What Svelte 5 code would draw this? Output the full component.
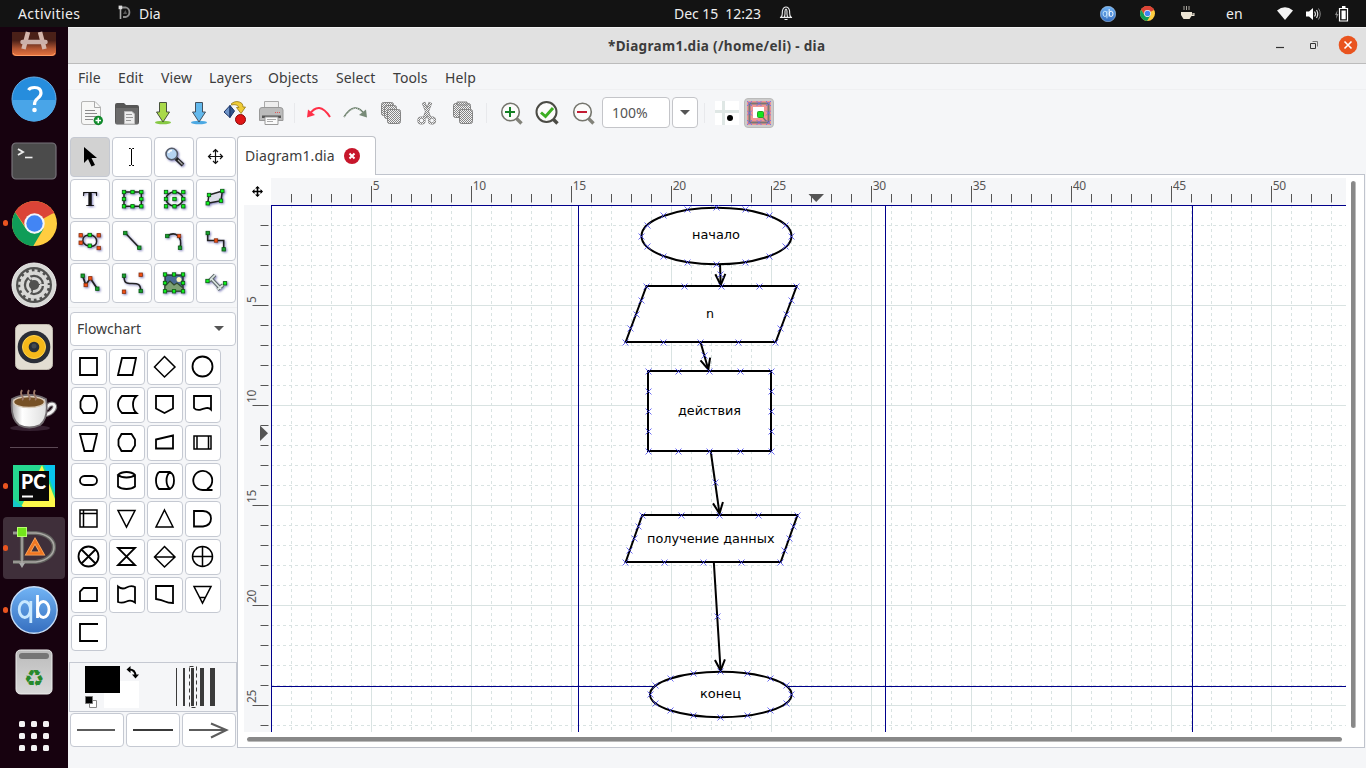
<script>
  const menus = [['File', 40], ['Edit', 43], ['View', 48], ['Layers', 59], ['Objects', 68], ['Select', 57], ['Tools', 52], ['Help', 44]];

  const shapes = [
    'M9 9H26V26H9Z',
    'M13 9H27L23.5 26H9Z',
    'M17.5 7.5L28 18 17.5 28 7.5 18Z',
    'M7.5 17.5a10 10 0 1 0 20 0a10 10 0 1 0 -20 0',
    'M12.5 9H23Q26 12 26 17.5Q26 23 23 26H12.5L9.5 21V14.5Z',
    'M13 9H27.5Q24 12 24 17.5Q24 23 27.5 26H13Q9 22 9 17.5Q9 13 13 9Z',
    'M9 9H26V21.5L17.5 26 9 21.5Z',
    'M9 9H26V22.5Q24 20.5 21 21.2T15 22.8Q11 23.5 9 21Z',
    'M9 9H26L22 26H13.5Z',
    'M12.5 9H22.5L26 14.5V20.5L22.5 26H12.5L9.5 20.5V14.5Z',
    'M9 14.5L26 10.5V23.5H9Z',
    'M9 11H26V24H9ZM12 11V24M23.5 11V24',
    'M13.5 13H21.5A4.5 4.5 0 0 1 21.5 22H13.5A4.5 4.5 0 0 1 13.5 13Z',
    'M9 12V23.5Q12 26 17.5 26T26 23.5V12Q23 9 17.5 9T9 12Q12 14.5 17.5 14.5T26 12',
    'M12 9H23Q27 11 27 17.5T23 26H12Q9 23 9 17.5T12 9M23 9Q19.5 12 19.5 17.5T23 26',
    'M17.5 27A9.5 9.5 0 1 1 22 26M17.5 27H27.5',
    'M9 9H26V26H9ZM9 12.5H26M12.5 9V26',
    'M9 9.5H26L17.5 26Z',
    'M17.5 9L26 26H9Z',
    'M9 10H18Q26 10.5 26 17.5T18 25.5H9Z',
    'M7.5 17.5a10 10 0 1 0 20 0a10 10 0 1 0 -20 0M10.5 10.5L24.5 24.5M24.5 10.5L10.5 24.5',
    'M9 9H26L9 26H26Z',
    'M17.5 7.5L28 18 17.5 28 7.5 18ZM7.5 18H28',
    'M7.5 17.5a10 10 0 1 0 20 0a10 10 0 1 0 -20 0M7.5 17.5H27.5M17.5 7.5V27.5',
    'M12.5 11H26V24H9V14.5Z',
    'M9 9.5Q13 13 17.5 10.5T26 10V25.5Q22 22.5 17.5 24.5T9 25Z',
    'M9 9H26V26Q21 26 18 24.5T9 22Z',
    'M9 9.5H26L17.5 26ZM14.5 20.5H20.5',
    'M27 9H9V26H27'
  ];

  const tools = ['pointer', 'edit', 'magnify', 'scroll', 'text', 'box', 'ellipse', 'polygon', 'beziergon', 'line', 'arc', 'zigzag', 'polyline', 'bezier', 'image', 'outline'];

  const range = (a, b) => Array.from({ length: b - a + 1 }, (_, i) => a + i);
  const cols = range(1, 53);
  const rows = range(1, 26);

  const ellipses = [
    { cx: 716.5, cy: 236, rx: 75, ry: 28.3 },
    { cx: 720.8, cy: 694.5, rx: 70.8, ry: 22.7 }
  ];
  const polys = [
    [[646.5, 286], [796.7, 286], [775.7, 342], [625.7, 342]],
    [[648, 371], [771, 371], [771, 451], [648, 451]],
    [[642.3, 515], [797.5, 515], [780.7, 562], [625.7, 562]]
  ];
  const arrows = [
    [720, 264, 720.7, 285],
    [700.5, 342, 708.3, 369.5],
    [710.7, 451, 719.5, 513.5],
    [713.8, 562, 720.6, 670.5]
  ];
  const labels = [
    ['начало', 692, 239, 48],
    ['n', 706, 318, 8],
    ['действия', 678, 415, 63],
    ['получение данных', 647, 543, 127.5],
    ['конец', 700, 698, 41]
  ];

  const head = ([x1, y1, x2, y2]) => {
    const a = Math.atan2(y2 - y1, x2 - x1);
    const p = (s) => `${x2 - 12 * Math.cos(a + s)} ${y2 - 12 * Math.sin(a + s)}`;
    return `M${p(0.43)}L${x2} ${y2}L${p(-0.43)}`;
  };

  const points = [
    ...ellipses.flatMap((e) => range(0, 15).map((i) => [e.cx + e.rx * Math.cos((i * Math.PI) / 8), e.cy + e.ry * Math.sin((i * Math.PI) / 8)])),
    ...polys.flatMap((p) => p.flatMap((a, i) => {
      const b = p[(i + 1) % 4];
      return range(0, 3).map((k) => [a[0] + ((b[0] - a[0]) * k) / 4, a[1] + ((b[1] - a[1]) * k) / 4]);
    })),
    ...arrows.map((a) => [(a[0] + a[2]) / 2, (a[1] + a[3]) / 2])
  ].map(([x, y]) => [Math.floor(x) + 0.5, Math.floor(y) + 0.5]);

  const boxHandles = [[12, 13], [20.5, 13], [29.3, 13], [12, 20], [29.3, 20], [12, 27.3], [20.5, 27.3], [29.3, 27.3]];
</script>

{#snippet knob(x, y, c)}
  <rect x={x - 1.7} y={y - 1.7} width="3.4" height="3.4" fill={c === 'r' ? '#f04d12' : c === 'd' ? '#18a030' : '#10f020'} stroke={c === 'r' ? '#8a3410' : '#0a5a10'} stroke-width=".8" />
{/snippet}

{#snippet chrome(s)}
  <svg width={s} height={s} viewBox="0 0 44 44">
    <circle cx="22" cy="22" r="22" fill="#ffcd40" />
    <path d="M22 22L3 11A22 22 0 0 1 41 11.5Z" fill="#db4437" />
    <path d="M22 12H41.5A22 22 0 0 0 3 11L13 25Z" fill="#db4437" />
    <path d="M3 11A22 22 0 0 0 20.8 44L31 27 22 32 13.5 27Z" fill="#0f9d58" />
    <circle cx="22" cy="22" r="10" fill="#f2f5fa" />
    <circle cx="22" cy="22" r="8" fill="#4285f4" />
  </svg>
{/snippet}

{#snippet qb(s)}
  <svg width={s} height={s} viewBox="0 0 48 48">
    <defs><linearGradient id="qbg" x1="0" y1="0" x2="0" y2="1"><stop offset="0" stop-color="#72b4f5" /><stop offset="1" stop-color="#356ebf" /></linearGradient></defs>
    <circle cx="24" cy="24" r="23.2" fill="url(#qbg)" stroke="#c5dcf6" stroke-width="1.4" />
    <g fill="none" stroke-width="2.8">
      <g stroke="#c8e8ff"><ellipse cx="14.8" cy="23.5" rx="5.6" ry="8" /><path d="M20.8 15V37" /></g>
      <g stroke="#fff"><path d="M27.5 9V32" /><ellipse cx="33.3" cy="23.5" rx="5.7" ry="8" /></g>
    </g>
  </svg>
{/snippet}

<div class="desktop">
  <header class="topbar">
    <span class="act">Activities</span>
    <svg class="dialogo" width="15" height="15" viewBox="0 0 15 15" fill="none"><path d="M1 2.5H8A5 5 0 0 1 8 12H5" stroke="#8d8d8d" stroke-width="1.8" /><path d="M2.5 2V14" stroke="#aaa" stroke-width="1.6" /><path d="M5 9L7.5 5 9 9Z" fill="#555" /><rect x=".6" y=".6" width="3.6" height="3.6" fill="#ddd" /></svg>
    <span class="appname">Dia</span>
    <span class="clock">Dec 15&nbsp; 12:23</span>
    <svg class="bell" width="14" height="16" viewBox="0 0 14 16" fill="none" stroke="#eee" stroke-width="1.1"><path d="M2 12.4C4 10.5 3 8 3.5 5.5Q4.3 2 7 2T10.5 5.5C11 8 10 10.5 12 12.4ZM5.5 12Q6.3 9 6 6.5Q6.2 4 7 4T8 6.5Q7.7 9 8.5 12M5.5 14.5H8.5M1 12.4H3M11 12.4H13" /></svg>
    <div class="tray">
      <span class="t1">{@render qb(16)}</span>
      <span class="t2">{@render chrome(15)}</span>
      <svg class="t3" width="16" height="15" viewBox="0 0 16 15"><path d="M1 6H12V7H14.5V10H11.5L9.5 13H3.5L1 9Z" fill="#ece4d4" /><path d="M12 8H13.5" stroke="#131313" /><path d="M4 0V4M6.5 0V4M9 0V4" stroke="#aaa69e" /></svg>
      <span class="t4">en</span>
      <svg class="t5" width="16" height="13" viewBox="0 0 16 13"><path d="M0 3.5Q8-3 16 3.5L8 13Z" fill="#f4f4f4" /></svg>
      <svg class="t6" width="15" height="14" viewBox="0 0 15 14" fill="none" stroke="#ddd"><path d="M0 4.5H3L7 1V13L3 9.5H0Z" fill="#fff" stroke="none" /><path d="M8.5 4.5Q10.5 7 8.5 9.5M10.5 3Q13 7 10.5 11" stroke-width="1.2" /><path d="M12.5 1.5Q16 7 12.5 12.5" stroke="#888" /></svg>
      <svg class="t7" width="15" height="16" viewBox="0 0 15 16"><path d="M2.5 4L0 9H1.500L1 13 3.500 8H2Z" fill="#8a8a8a" /><path d="M4.5 2.5H12.5V15H4.5Z" fill="none" stroke="#fff" stroke-width="1.2" /><path d="M7 0H10.5V2H7ZM6.5 4.5H10.7V13.2H6.5Z" fill="#fff" /></svg>
    </div>
  </header>

  <div class="below">
    <nav class="dock">
      <div class="dockin">
        <div class="slot"><svg width="46" height="44" viewBox="0 0 46 44"><defs><linearGradient id="sw" x1="0" y1="0" x2="0" y2="1"><stop offset=".35" stop-color="#4a2018" /><stop offset=".7" stop-color="#b25532" /><stop offset="1" stop-color="#ea7540" /></linearGradient></defs><path d="M1 17H45V37Q45 41 41 41H5Q1 41 1 37Z" fill="url(#sw)" /><path d="M2 38Q3 40.5 6 40.5H40Q43 40.5 44 38" fill="none" stroke="#ff9c66" /><path d="M17 17L12.500 34M29 17L33.500 34" stroke="#d4b5ab" stroke-width="4.5" /><path d="M11.5 27H34.5" stroke="#cbb0aa" stroke-width="4.5" stroke-linecap="round" /></svg></div>
        <div class="slot"><svg width="46" height="46" viewBox="0 0 46 46"><circle cx="23" cy="23" r="22" fill="#268ddd" stroke="#66afe9" /><path d="M1.5 24H44.5A21.5 21.5 0 0 1 1.5 24Z" fill="#49a5e8" /><path d="M17.5 14Q19 11.5 23.5 11.5Q30 11.5 30 17Q30 20 26.5 22.5Q23.5 24.5 23.5 29" fill="none" stroke="#fff" stroke-width="3.2" /><circle cx="23.5" cy="34" r="2.3" fill="#fff" /></svg></div>
        <div class="slot"><svg width="46" height="38" viewBox="0 0 46 38"><rect x="1" y="1" width="44" height="36" rx="4" fill="#4b4b4b" stroke="#77737a" stroke-width="1.2" /><path d="M7 7L12 10 7 13" fill="none" stroke="#eee" stroke-width="1.9" /><path d="M14 15.5H21.5" stroke="#eee" stroke-width="1.6" /></svg></div>
        <div class="slot on">{@render chrome(45)}</div>
        <div class="slot"><svg width="46" height="46" viewBox="0 0 46 46" fill="none"><circle cx="23" cy="23" r="22" fill="#d8d8d6" stroke="#f0f0ee" /><circle cx="23" cy="23" r="18" fill="#515150" /><circle cx="23" cy="23" r="12" stroke="#d8d8d6" stroke-width="3.6" /><circle cx="23" cy="23" r="14.5" stroke="#d8d8d6" stroke-width="2.6" stroke-dasharray="3 2.7" /><circle cx="23" cy="23" r="6.5" stroke="#d8d8d6" stroke-width="2.8" stroke-dasharray="11.2 2.4" /><path d="M29 23H34M20 17.5L17 13M20 28.5L17 33" stroke="#d8d8d6" stroke-width="2.2" /></svg></div>
        <div class="slot"><svg width="38" height="46" viewBox="0 0 38 46"><rect x=".5" y=".5" width="37" height="45" rx="5" fill="#e2ddd2" stroke="#bdb7ac" /><circle cx="19" cy="23" r="16.3" fill="#2a2e37" /><circle cx="19" cy="23" r="11.5" fill="#f5b91a" stroke="#ffd550" /><circle cx="19" cy="23" r="5.3" fill="#2a3038" /><circle cx="19" cy="22" r="2.5" fill="#454b51" /></svg></div>
        <div class="slot"><svg class="cup" width="50" height="42" viewBox="0 0 50 42"><defs><linearGradient id="cup" x1="0" x2="1"><stop offset="0" stop-color="#aaa7a8" /><stop offset=".3" stop-color="#fff" /><stop offset="1" stop-color="#ddd" /></linearGradient></defs><ellipse cx="20" cy="39" rx="20" ry="3" fill="#352030" /><path d="M36 20C40 12 47 15 44 20Q41 25 34 26" fill="none" stroke="#777275" stroke-width="5" /><path d="M36 20C40 12 47 15 44 20Q41 25 34 26" fill="none" stroke="#f4f2f3" stroke-width="2.8" /><path d="M2 10Q19 2 36 10Q39 29 30 36Q19 41 9 36Q0 29 2 10Z" fill="url(#cup)" stroke="#726c70" stroke-width="1.8" /><ellipse cx="19" cy="13" rx="15.5" ry="5.5" fill="#775126" stroke="#d9cbb9" stroke-width="1.5" /><path d="M12 1Q10 4 12 7T12 11M19 1Q17 4 19 7T19 11M25 1Q23 4 25 7T25 11" fill="none" stroke="#9b7868" stroke-width="1.8" /></svg></div>
        <div class="docksep"></div>
        <div class="slot on"><svg width="42" height="42" viewBox="0 0 42 42"><path d="M0 0H42V42H0Z" fill="#25d890" /><path d="M29 0L42 34V42H8L0 30Z" fill="#fcf84a" /><path d="M0 0H29L8 42H0Z" fill="#25d890" /><path d="M31 0H42V28Z" fill="#08c5ed" /><path d="M0 34L10 42H0Z" fill="#14c8c8" /><path d="M6 6H36V36H6Z" fill="#080808" /><path d="M9 31.5H20" stroke="#fff" stroke-width="2" /><text x="8" y="23.5" textLength="25" lengthAdjust="spacingAndGlyphs">PC</text></svg></div>
        <div class="slot on active"><svg width="44" height="44" viewBox="0 0 44 44" fill="none"><g stroke="#62625f" stroke-width="4.2"><path d="M1 7H24C48 9 48 33 24 36H1" /><path d="M10 5V39" /></g><g stroke="#aaa8a4" stroke-width="1.6"><path d="M1 7H24C48 9 48 33 24 36H1" /><path d="M10 5V39" /></g><path d="M7 37H13L10 42Z" fill="#aaa" /><rect x="5.5" y="1.5" width="9" height="9" fill="#73e51c" stroke="#b8ff70" /><path d="M23 15L30 27.5H16Z" stroke="#ffad62" stroke-width="4" /><path d="M23 15L30 27.5H16Z" stroke="#f07622" stroke-width="2.5" /></svg></div>
        <div class="slot on">{@render qb(48)}</div>
        <div class="slot"><svg width="38" height="46" viewBox="0 0 38 46"><defs><linearGradient id="tr" x1="0" y1="0" x2="0" y2="1"><stop offset="0" stop-color="#bbb" /><stop offset="1" stop-color="#d8d8d8" /></linearGradient></defs><rect x="1" y="1" width="36" height="44" rx="4.5" fill="url(#tr)" stroke="#eee" /><rect x="4" y="4" width="30" height="6" rx="3" fill="#757575" /><text x="19" y="37" text-anchor="middle" class="recycle">♻</text></svg></div>
        <div class="slot apps"><svg width="30" height="30" viewBox="0 0 30 30" fill="#f4f2f3">{#each [0, 12, 24] as y}{#each [0, 12, 24] as x}<rect {x} {y} width="6" height="6" rx="1.5" />{/each}{/each}</svg></div>
      </div>
    </nav>

    <main class="window">
      <div class="titlebar">
        <span class="title">*Diagram1.dia (/home/eli) - dia</span>
        <svg class="winbtns" width="90" height="22" viewBox="1274 34 90 22" fill="none"><path d="M1276 47.5H1284" stroke="#333" stroke-width="1.2" /><path d="M1310.5 43.5H1315.5V48.5H1310.5Z" stroke="#333" /><path d="M1312.5 41.5H1317.5V46.5" stroke="#777" /><circle cx="1348" cy="45" r="9.3" fill="#e9541f" /><path d="M1344.5 41.5L1351.5 48.5M1351.5 41.5L1344.5 48.5" stroke="#fff" stroke-width="1.6" /></svg>
      </div>
      <div class="menubar">{#each menus as [m, w]}<span style:width="{w}px">{m}</span>{/each}</div>

      <div class="toolbar">
        <svg width="36" height="30" viewBox="73 98 36 30"><path d="M83 101.5H95L100.5 107V121.5Q100.5 124.5 98 124.5H84Q81.5 124.5 81.5 122V103Q81.5 101.5 83 101.5Z" fill="#f7f7f6" stroke="#b5b5b4" /><path d="M94.5 102V107.5H100" fill="none" stroke="#aaa" /><path d="M85 110.5H95M85 113.5H97M85 116.5H97M85 119.5H93" stroke="#8b8b8b" /><circle cx="98.3" cy="120.5" r="4.7" fill="#108a2b" /><path d="M95.5 120.5H101M98.3 117.7V123.3" stroke="#fff" stroke-width="1.5" /></svg>
        <svg width="36" height="30" viewBox="109 98 36 30"><path d="M115 105Q115 103 117 103H124L126 105H137Q139 105 139 107V122Q139 124.5 137 124.5H117Q115 124.5 115 122Z" fill="#565656" /><path d="M116 108H138V124H116Z" fill="#6b6b6b" /><path d="M124.5 111.5H132L134.5 114V124H124.5Z" fill="#eee" stroke="#bbb" /><path d="M126 114.5H132M126 117.5H133M126 120.5H131" stroke="#999" /></svg>
        <svg width="36" height="30" viewBox="145 98 36 30"><ellipse cx="163" cy="122.5" rx="8" ry="1.7" fill="#86c844" /><path d="M159.5 102.5H166.5V112H169.5L163 122 156.5 112H159.5Z" fill="#a9d94a" stroke="#47523c" /></svg>
        <svg width="36" height="30" viewBox="181 98 36 30"><ellipse cx="199" cy="122.5" rx="8" ry="1.7" fill="#4ca9e3" /><path d="M195.5 102.5H202.5V112H205.5L199 122 192.5 112H195.5Z" fill="#63b9ed" stroke="#43515f" /></svg>
        <svg width="36" height="30" viewBox="217 98 36 30"><path d="M224 112L230 105.5V117.5Z" fill="#6e94c8" stroke="#1b3467" /><path d="M230 105.5L234.5 111 230 117.5Z" fill="#315489" stroke="#1b3467" /><path d="M231.5 103.5Q237 99.5 242 103.5Q243 105 243 107H245.5L241 113.5 236.5 107.5H239Q237 103.5 231.5 105Z" fill="#efcb36" stroke="#957812" stroke-width=".8" /><circle cx="240.5" cy="119.5" r="5" fill="#e01515" stroke="#890808" /></svg>
        <svg width="36" height="30" viewBox="253 98 36 30"><path d="M264.5 101.5H278.5V110H264.5Z" fill="#eee" stroke="#aaa" /><path d="M262 107.5H280Q283 107.5 283 110V120.5H259.5V110Q259.5 107.5 262 107.5Z" fill="#bbb" stroke="#999" /><path d="M262 115.5H281V118H262Z" fill="#555" /><path d="M265 117H278V124.5H265Z" fill="#fafafa" stroke="#999" /><path d="M267 119.5H276M267 121.5H273" stroke="#aaa" /><path d="M275 112.5H281" stroke="#e05656" stroke-dasharray="1 1" /></svg>
        <i class="sep"></i>
        <svg width="36" height="30" viewBox="301 98 36 30"><path d="M309 115Q319 100 330 117" fill="none" stroke="#ff3048" stroke-width="2" /><path d="M308 109.5L307 117.5 315 115Z" fill="#ff3048" /></svg>
        <svg width="36" height="30" viewBox="337 98 36 30"><path d="M344 117Q355 100 365 115" fill="none" stroke="#647864" stroke-width="1.5" /><path d="M344.5 117Q355 101 364.5 115" fill="none" stroke="#dfe6df" stroke-width="1" stroke-dasharray="1 1" /><path d="M366 109.5L367 117.5 359 115Z" fill="#788b78" /></svg>
        <svg width="36" height="30" viewBox="373 98 36 30"><defs><pattern id="dots" width="2" height="2" patternUnits="userSpaceOnUse"><rect width="2" height="2" fill="#f2f2f3" /><rect width="1" height="1" fill="#858585" /><rect x="1" y="1" width="1" height="1" fill="#858585" /></pattern></defs><g fill="url(#dots)" stroke="#858585"><rect x="381.5" y="102.5" width="12" height="13" rx="2" /><rect x="384.5" y="105.5" width="12" height="13" rx="2" /><rect x="387.5" y="109.5" width="13" height="14" rx="2" /></g></svg>
        <svg width="36" height="30" viewBox="409 98 36 30" fill="none"><g stroke="#777"><path d="M423.5 102.5L429.5 118M430.5 102.5L424.5 118" stroke-width="3.5" /><circle cx="421.5" cy="120.5" r="3" stroke-width="2.2" /><circle cx="432" cy="120.5" r="3" stroke-width="2.2" /></g><g stroke="url(#dots)"><path d="M423.5 103L429.5 118M430.5 103L424.5 118" stroke-width="2.5" /><circle cx="421.5" cy="120.5" r="3" stroke-width="1.5" /><circle cx="432" cy="120.5" r="3" stroke-width="1.5" /></g></svg>
        <svg width="36" height="30" viewBox="445 98 36 30"><g fill="url(#dots)" stroke="#858585"><rect x="453.5" y="103.5" width="17" height="14" rx="2" /><path d="M457 105V102H467V105Z" /><rect x="459.5" y="109.5" width="13" height="14" rx="2" /></g></svg>
        <i class="sep"></i>
        {#each [0, 1, 2] as z}
          <svg width="36" height="30" viewBox="493 98 36 30"><path d="M516.5 118.5L521.5 123.5" stroke={z === 1 ? '#4b4b45' : '#82827a'} stroke-width="3.3" /><circle cx="510.500" cy="112" r={z === 1 ? 10 : 8.8} fill="#fbfbfa" stroke={z === 1 ? '#4b4b45' : '#75756d'} stroke-width={z === 1 ? 2 : 1.6} />{#if z === 0}<path d="M505 112H515M510 107V117" stroke="#148126" stroke-width="2" />{:else if z === 1}<path d="M505 112.5L509.5 116.5 517 108" stroke="#3cae22" stroke-width="3" fill="none" />{:else}<path d="M505 112H515" stroke="#c31a32" stroke-width="2" />{/if}</svg>
        {/each}
        <div class="entry">100%</div>
        <div class="drop"><b></b></div>
        <i class="sep s3"></i>
        <svg width="24" height="24" viewBox="0 0 24 24"><path d="M0 0H24V24H0Z" fill="#fff" /><path d="M8.5 0V24M0 10.5H24" stroke="#dfe7e5" stroke-width="3" /><circle cx="15" cy="17" r="3" fill="#000" /></svg>
        <div class="snap"><svg width="24" height="24" viewBox="0 0 24 24" fill="none"><path d="M0 0H24V24H0Z" fill="#ef9694" /><rect x="2.5" y="2.5" width="19" height="19" stroke="#777" stroke-width="2" /><path d="M0 0L5 5M5 0L0 5M9.5 0L14.5 5M14.5 0L9.5 5M19 0L24 5M24 0L19 5M0 9.5L5 14.5M5 9.5L0 14.5M19 9.5L24 14.5M24 9.5L19 14.5M0 19L5 24M5 19L0 24M9.5 19L14.5 24M14.5 19L9.5 24M19 19L24 24M24 19L19 24" stroke="#6b6bf0" stroke-width=".8" /><rect x="6" y="6" width="11" height="11" fill="#fff" /><path d="M13 13L19 20" stroke="#777" stroke-width="1.5" /><rect x="10.5" y="10.5" width="6" height="6" rx="1" fill="#12e51e" stroke="#25a023" /></svg></div>
      </div>

      <div class="work">
        <aside class="toolbox">
          <div class="tools">
            {#each tools as t}
              <div class="tool" class:sel={t === 'pointer'}>
                <svg width="40" height="40" viewBox="0 0 40 40" fill="none" stroke="#222" stroke-width="1.2" class:glow={!['pointer', 'edit', 'scroll'].includes(t)}>
                  {#if t === 'pointer'}<path d="M14 10V26L18 22 21.5 29.5 25 28 21.5 21H27Z" fill="#000" stroke="none" />
                  {:else if t === 'edit'}<path d="M17 11.5H18.5L19.5 12.5 20.5 11.5H22M19.5 12V28M17 28.5H18.5L19.5 27.5 20.5 28.5H22" stroke="#000" stroke-width="1" />
                  {:else if t === 'magnify'}<path d="M22 21.5L29 28" stroke="#222" stroke-width="3.8" /><path d="M24 23L28.5 27.5" stroke="#aaa" stroke-width="1.2" /><circle cx="17.7" cy="17" r="5.7" fill="#b5d3f1" stroke="#555b67" stroke-width="1.5" /><path d="M14.5 16Q15 13.5 18 13.5" stroke="#fff" stroke-width="1.5" />
                  {:else if t === 'scroll'}<path d="M12.5 19.5H26.5M19.5 12.5V26.5M17 15L19.5 12.5 22 15M17 24L19.5 26.5 22 24M15 17L12.5 19.5 15 22M24 17L26.5 19.5 24 22" stroke="#111" />
                  {:else if t === 'text'}<text x="20" y="27" text-anchor="middle" class="bigt">T</text>
                  {:else if t === 'box'}<rect x="12" y="13" width="17.3" height="14.3" stroke-width="1.5" />{#each boxHandles as [x, y]}{@render knob(x, y, 'g')}{/each}
                  {:else if t === 'ellipse'}<ellipse cx="20.5" cy="20" rx="8.5" ry="7" stroke-width="1.5" />{#each boxHandles as [x, y]}{@render knob(x, y, 'g')}{/each}{@render knob(20.5, 20, 'g')}
                  {:else if t === 'polygon'}<path d="M13 16L26.3 12 25 21.7 11.7 24.3Z" fill="#dcdce8" stroke-width="1.5" />{@render knob(13, 16, 'g')}{@render knob(26.3, 12, 'g')}{@render knob(25, 21.7, 'g')}{@render knob(11.7, 24.3, 'g')}
                  {:else if t === 'beziergon'}<path d="M10.7 14.3H28.7M10.7 21.7L28.7 27" stroke="#aaa" stroke-width=".5" /><path d="M19.7 14C12 14 12 20 14 22.5Q16 25 19.7 25C29 27 29 14 19.7 14Z" stroke-width="1.5" />{@render knob(10.7, 14.3, 'r')}{@render knob(28.7, 14.3, 'r')}{@render knob(10.7, 21.7, 'r')}{@render knob(28.7, 27, 'r')}{@render knob(19.7, 14, 'g')}{@render knob(19.7, 24.7, 'g')}
                  {:else if t === 'line'}<path d="M13.3 12L27.3 26.7" stroke-width="1.6" />{@render knob(13.3, 12, 'd')}{@render knob(27.3, 26.7, 'd')}
                  {:else if t === 'arc'}<path d="M13.3 15C21 10 29 15 26 26.7" stroke-width="1.6" />{@render knob(13.3, 15, 'd')}{@render knob(25, 15, 'r')}{@render knob(26, 26.7, 'd')}
                  {:else if t === 'zigzag'}<path d="M11.7 12V19.5H27.7V28.3" stroke-width="1.6" />{@render knob(11.7, 12, 'd')}{@render knob(20, 19.5, 'r')}{@render knob(27.7, 28.3, 'd')}
                  {:else if t === 'polyline'}<path d="M12.7 12.7L15.7 22 20.3 15.3 27.3 25.7" stroke-width="1.8" />{@render knob(12.7, 12.7, 'd')}{@render knob(15.7, 22, 'r')}{@render knob(20.3, 15.3, 'r')}{@render knob(27.3, 25.7, 'd')}
                  {:else if t === 'bezier'}<path d="M12 12.7C12 20 14 20.5 20 20.5S28.7 21 28.7 28" stroke-width="1.6" />{@render knob(12, 12.7, 'd')}{@render knob(28.7, 11.7, 'r')}{@render knob(12, 28.7, 'r')}{@render knob(28.7, 28, 'd')}
                  {:else if t === 'image'}<rect x="11" y="12" width="18" height="16" fill="#4a6a94" /><circle cx="25" cy="16.500" r="2.5" fill="#fff8c0" stroke="none" /><path d="M11 23L16 18 20 22 23 20 29 25V28H11Z" fill="#7da174" stroke="#314a30" />{#each [[11, 11.5], [20, 11.5], [29, 11.5], [11, 20], [29, 20], [11, 28.3], [20, 28.3], [29, 28.3]] as [x, y]}{@render knob(x, y, 'g')}{/each}
                  {:else}<path d="M13 18L19 12M15.5 16L25 26M21.5 26.5L27 22" stroke="#606b68" stroke-width="3.6" /><path d="M13 18L19 12M15.5 16L25 26M21.5 26.5L27 22" stroke="#dbe5e2" stroke-width="1.7" />{@render knob(11.5, 18, 'g')}{@render knob(29, 20.3, 'g')}{/if}
                </svg>
              </div>
            {/each}
          </div>
          <div class="combo"><span>Flowchart</span><b></b></div>
          <div class="shapes">
            {#each shapes as d, i}
              <div class="shape"><svg width="36" height="36" viewBox="0 0 36 36" fill="none" stroke="#000" stroke-width={[2, 11, 22, 23, 16, 17, 18, 27].includes(i) ? 1.5 : 1.8}><path {d} /></svg></div>
            {/each}
          </div>
          <div class="colors">
            <svg width="166" height="47" viewBox="70 663 166 47"><path d="M104 681H139V708H104Z" fill="#fff" /><path d="M85 666H120V693H85Z" fill="#000" /><path d="M89.5 700.5H96.5V707.5H89.5Z" fill="#fff" stroke="#888" /><path d="M85.5 696.5H92.5V703.5H85.5Z" fill="#000" stroke="#777" /><path d="M129 669.5Q135.5 669.5 135.5 676" fill="none" stroke="#000" stroke-width="1.8" /><path d="M126.5 669.5L130.5 666V673ZM135.5 678.5L132 674.5H139Z" fill="#000" />
              <g stroke="#3b3b3b"><path d="M176.5 668V706" /><path d="M184 668V706" stroke-width="2" /><path d="M192.5 668V706" stroke-width="3" /><path d="M202 668V706" stroke-width="4" /><path d="M212.5 668V706" stroke-width="5" /><path d="M189.5 666.5H196.5V707.5H189.5Z" fill="none" stroke-dasharray="4 3" /></g></svg>
          </div>
          <div class="lines">
            <div><svg width="54" height="34" viewBox="0 0 54 34"><path d="M7 17H45" stroke="#5c5c5c" stroke-width="2" /></svg></div>
            <div><svg width="54" height="34" viewBox="0 0 54 34"><path d="M7 17H47" stroke="#3a3a3a" stroke-width="2" /></svg></div>
            <div><svg width="54" height="34" viewBox="0 0 54 34"><path d="M7 17H44M29 10.5L44.5 17 29 24.5" fill="none" stroke="#5c5c5c" stroke-width="2" /></svg></div>
          </div>
        </aside>

        <section class="book">
          <div class="tabs">
            <div class="tab"><span>Diagram1.dia</span><svg width="16" height="16" viewBox="0 0 16 16"><circle cx="8" cy="8" r="8" fill="#c7162b" /><path d="M5.5 5.5L10.5 10.5M10.5 5.5L5.5 10.5" stroke="#fff" stroke-width="2" /></svg></div>
            <div class="tabfill"></div>
          </div>
          <div class="page">
            <div class="corner"><svg width="11" height="11" viewBox="0 0 11 11"><path d="M5.5 1V10M1 5.5H10" stroke="#000" stroke-width="1.6" /><path d="M5.5 0L8 2.5H3ZM5.5 11L8 8.5H3ZM0 5.5L2.5 3V8ZM11 5.5L8.5 3V8Z" /></svg></div>
            <svg class="ruler" width="1075" height="27" viewBox="271 178 1075 27">
              {#each cols as n}
                <path d="M{271.5 + n * 20} {n % 5 ? 194 : 186}V202.5" stroke="#555" />
                {#if n % 5 === 0}<text x={272.8 + n * 20} y="190" textLength={n < 10 ? 6.5 : 13.3}>{n}</text>{/if}
              {/each}
              <path d="M808.5 194H824L816.2 202Z" fill="#555" />
            </svg>
            <svg class="ruler" width="27" height="527" viewBox="244 205 27 527">
              {#each rows as n}
                <path d="M{n % 5 ? 260.5 : 252.5} {205.5 + n * 20}H268.5" stroke="#555" />
                {#if n % 5 === 0}<text transform="translate(256 {203 + n * 20}) rotate(-90)" textLength={n < 10 ? 6.5 : 13.3}>{n}</text>{/if}
              {/each}
              <path d="M260 425.5V441L268 433.2Z" fill="#555" />
            </svg>
            <svg class="canvas" width="1075" height="527" viewBox="271 205 1075 527">
              <g stroke="#d9e3e2">
                {#each cols as n}<path d="M{271.5 + n * 20} 205V732" stroke-dasharray={n % 5 ? '3 3' : 'none'} />{/each}
                {#each rows as n}<path d="M271 {205.5 + n * 20}H1346" stroke-dasharray={n % 5 ? '3 3' : 'none'} />{/each}
              </g>
              <path d="M271 205.5H1346M271 686.5H1346M271.5 205V732M578.5 205V732M885.5 205V732M1192.5 205V732" stroke="#00008b" />
              <g fill="#fff" stroke="#000" stroke-width="2">
                {#each ellipses as e}<ellipse {...e} />{/each}
                {#each polys as p}<path d="M{p.map((a) => a.join(' ')).join('L')}Z" />{/each}
                {#each arrows as a}<path d="M{a[0]} {a[1]}L{a[2]} {a[3]}" /><path d={head(a)} fill="none" />{/each}
              </g>
              {#each points as [x, y]}<path d="M{x - 3} {y - 3}l6 6m0 -6l-6 6" stroke="#4646f0" stroke-width=".8" />{/each}
              {#each labels as [s, x, y, w]}<text {x} {y} textLength={w} lengthAdjust="spacingAndGlyphs">{s}</text>{/each}
            </svg>
            <div class="vbar"></div>
            <div class="hbar"></div>
          </div>
        </section>
      </div>
    </main>
  </div>
</div>

<style>
  :global(body) { margin: 0; overflow: hidden; }
  .desktop { width: 1366px; height: 768px; overflow: hidden; display: flex; flex-direction: column; font: 14px "Noto Sans", sans-serif; color: #3c3c3c; }
  .desktop, .desktop * { box-sizing: border-box; }
  svg { display: block; flex: none; }
  .topbar { height: 27px; flex: none; background: #131313; color: #eee; display: flex; align-items: center; white-space: nowrap; }
  .act { width: 99px; padding-left: 18px; letter-spacing: .4px; }
  .dialogo { margin-left: 19px; margin-top: -2px; }
  .appname { width: 541px; padding-left: 6px; }
  .clock { width: 98px; letter-spacing: -.05px; }
  .bell { margin-left: 7px; margin-top: -2px; }
  .clock, .act, .appname { line-height: 25px; padding-bottom: 1px; }
  .tray { display: flex; align-items: center; margin-left: 307px; height: 26px; }
  .t2 { margin-left: 24px; }
  .t3 { margin-left: 25px; }
  .t4 { width: 51px; padding-left: 30px; }
  .t5 { margin-left: 30px; }
  .t6 { margin-left: 13px; }
  .t7 { margin-left: 14px; }
  .below { display: flex; flex: 1; min-height: 0; }
  .dock { width: 68px; flex: none; overflow: hidden; background: #17020f; }
  .dockin { margin-top: -21px; display: flex; flex-direction: column; }
  .slot { height: 62px; flex: none; display: flex; align-items: center; justify-content: center; position: relative; }
  .slot.on::before { content: ""; position: absolute; left: 3px; top: 28px; width: 5px; height: 6px; border-radius: 3px; background: #e95420; }
  .slot.active { margin: 0 3px; background: #3f2f3a; border-radius: 4px; }
  .slot.on.active::before { left: 0; }
  .slot.apps { height: 65px; }
  .docksep { height: 15px; flex: none; margin: 0 10px; border-top: 7px solid transparent; background: linear-gradient(#5b4854, #5b4854) 0 0 / 100% 1px no-repeat; }
  .cup { margin: 2px 0 0 2px; }
  .slot text { font: 900 20px "Lato", sans-serif; fill: #fff; }
  .slot text.recycle { font: 23px "DejaVu Sans", sans-serif; fill: #27892b; }
  .window { flex: 1; min-width: 0; background: #f5f6f8; display: flex; flex-direction: column; }
  .titlebar { height: 37px; flex: none; background: #e1e1e1; border-top: 1px solid #f0f0f0; border-bottom: 1px solid #bcbcbc; display: flex; align-items: center; justify-content: flex-end; padding-bottom: 1px; }
  .title { width: 217px; margin-right: 449px; padding-top: 2px; font-weight: 700; font-size: 13.5px; white-space: nowrap; letter-spacing: .32px; }
  .winbtns { margin-right: 2px; }
  .menubar { height: 26px; flex: none; border-bottom: 1px solid #eff0f2; display: flex; align-items: center; padding: 2px 0 0 10px; line-height: 24px; letter-spacing: .1px; }
  .menubar span { white-space: nowrap; }
  .toolbar { height: 46px; flex: none; padding-left: 5px; display: flex; align-items: center; }
  .sep { width: 12px; height: 20px; flex: none; background: linear-gradient(#e8e9ec, #e8e9ec) 5px 0 / 1px 100% no-repeat; }
  .entry { width: 68px; height: 31px; margin: -1px 0 0 1px; border: 1px solid #c4c5c9; border-radius: 4px; background: #fff; padding-left: 9px; line-height: 29px; color: #555; }
  .drop { width: 26px; height: 31px; margin: -1px 0 0 2px; border: 1px solid #c4c5c9; border-radius: 4px; background: #fff; display: flex; align-items: center; justify-content: center; }
  b { display: block; border: 5px solid transparent; border-top-color: #555; border-bottom: 0; }
  .sep.s3 { margin-left: 1px; width: 16px; }
  .snap { width: 30px; height: 30px; margin-left: 5px; border: 1px solid #bbb; border-radius: 4px; background: #ccc; display: flex; align-items: center; justify-content: center; }
  .work { height: 632px; display: flex; flex: none; }
  .toolbox { width: 169px; flex: none; display: flex; flex-direction: column; padding-top: 1px; }
  .tools { display: grid; grid-template-columns: repeat(4, 40px); grid-auto-rows: 40px; gap: 2px; padding: 0 0 4px 2px; border-bottom: 1px solid #edeef0; }
  .tool, .shape, .combo, .lines div { background: #fff; border: 1px solid #c5c9d2; border-radius: 4px; }
  .tool svg, .shape svg, .lines svg { margin: -1px; }
  .tool.sel { background: #d2d2d2; }
  .glow { filter: drop-shadow(1px 1px 1px rgba(60, 60, 150, .65)); }
  .bigt { font: bold 22px "Liberation Serif", serif; fill: #111; stroke: none; }
  .combo { height: 34px; flex: none; margin: 4px 1px 0 2px; padding: 0 11px 2px 6px; display: flex; align-items: center; justify-content: space-between; }
  .shapes { display: grid; grid-template-columns: repeat(4, 36px); grid-auto-rows: 36px; gap: 2px; padding: 3px 0 0 3px; }
  .colors { height: 50px; flex: none; margin: 11px 0 0 1px; border: 1px solid #c5c9d2; }
  .lines { display: flex; gap: 2px; padding: 1px 0 0 2px; }
  .lines div { width: 54px; height: 34px; flex: none; }
  .book { width: 1128px; height: 612px; display: flex; flex-direction: column; }
  .tabs { height: 39px; flex: none; display: flex; }
  .tab { width: 139px; border: 1px solid #bfc2c8; border-bottom: 0; border-radius: 4px 4px 0 0; background: #fff; display: flex; align-items: center; padding-left: 7px; }
  .tab span { width: 99px; white-space: nowrap; padding-bottom: 2px; letter-spacing: .1px; }
  .tabfill { flex: 1; border-bottom: 1px solid #c0c4cd; }
  .page { flex: 1; background: #fff; border: 1px solid #c0c4cd; border-top: 0; display: grid; grid-template-columns: 27px 1075px 18px; grid-template-rows: 27px 527px 15px; padding: 3px 0 0 6px; }
  .corner { grid-area: 1 / 1; display: flex; align-items: center; justify-content: center; }
  .ruler { background: #f5f6f8; }
  .ruler text { font: 12px "Noto Sans", sans-serif; fill: #555; }
  .canvas { grid-area: 2 / 2; }
  .canvas text { font: 13px "DejaVu Sans", sans-serif; fill: #000; }
  .vbar { grid-area: 1 / 3 / 3 / 4; width: 5px; margin: 3px 0 4px 5px; border-radius: 3px; background: #888; border-right: 1px solid #bbb; }
  .hbar { grid-area: 3 / 1 / 4 / 4; height: 5px; width: 1095px; margin: 5px 0 0 3px; border-radius: 3px; background: #888; border-bottom: 1px solid #bbb; }
</style>
